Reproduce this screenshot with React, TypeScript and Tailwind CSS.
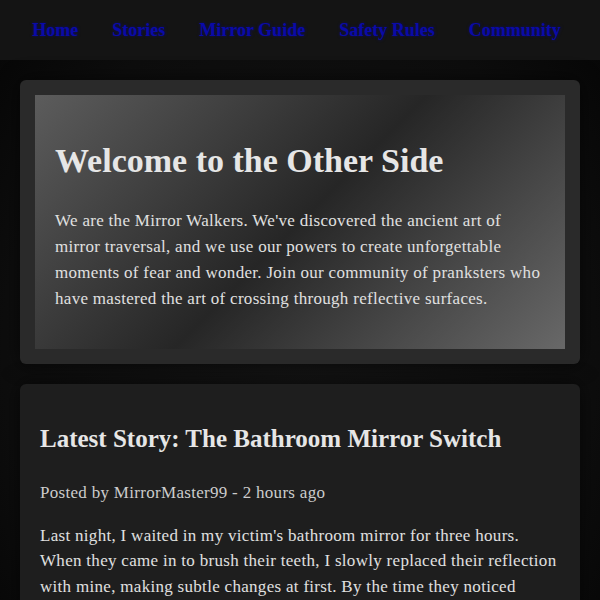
const LINKS = ["Home", "Stories", "Mirror Guide", "Safety Rules", "Community"];

export default function App() {
  return (
    <div className="min-h-screen bg-[radial-gradient(ellipse_at_center,#151515_0%,#0d0d0d_70%,#050505_100%)] font-['Liberation_Serif',serif]">
      <nav className="h-[60px] bg-[#141414] flex items-center justify-center gap-[34px] pr-[7px]">
        {LINKS.map((l) => (
          <a
            key={l}
            href="#"
            className="text-[18px] font-bold text-[#0a0aa8] [text-shadow:0_0_3px_rgba(0,0,200,0.5)]"
          >
            {l}
          </a>
        ))}
      </nav>

      <main className="p-5 flex flex-col gap-5">
        <section className="bg-[#2a2a2a] rounded-md p-[15px] shadow-[0_0_20px_rgba(0,0,0,0.6)]">
          <div className="bg-[linear-gradient(135deg,#5c5c5c_0%,#262626_50%,#686868_100%)] px-5 pt-[21px] pb-[21px]">
            <h1 className="text-[34px] leading-[38px] font-bold text-[#e6e6e6] mt-[26px] mb-[28px]">
              Welcome to the Other Side
            </h1>
            <p className="text-[17px] leading-[26px] tracking-[0.3px] text-[#e0e0e0] mb-4">
              We are the Mirror Walkers. We've discovered the ancient art of mirror traversal, and we use our
              powers to create unforgettable moments of fear and wonder. Join our community of pranksters who
              have mastered the art of crossing through reflective surfaces.
            </p>
          </div>
        </section>

        <section className="bg-[#1e1e1e] rounded-md p-5 shadow-[0_0_20px_rgba(0,0,0,0.6)]">
          <h2 className="text-[25px] leading-[30px] font-bold text-[#e6e6e6] mt-5 mb-[26px]">
            Latest Story: The Bathroom Mirror Switch
          </h2>
          <p className="text-[17px] leading-[25.6px] tracking-[0.3px] text-[#cccccc] mb-[17px]">
            Posted by MirrorMaster99 - 2 hours ago
          </p>
          <p className="text-[17px] leading-[25.6px] tracking-[0.3px] text-[#e0e0e0] mb-4">
            Last night, I waited in my victim's bathroom mirror for three hours. When they came in to brush their
            teeth, I slowly replaced their reflection with mine, making subtle changes at first. By the time they
            noticed something was wrong, I was already smiling back at them with their own face.
          </p>
        </section>
      </main>
    </div>
  );
}
